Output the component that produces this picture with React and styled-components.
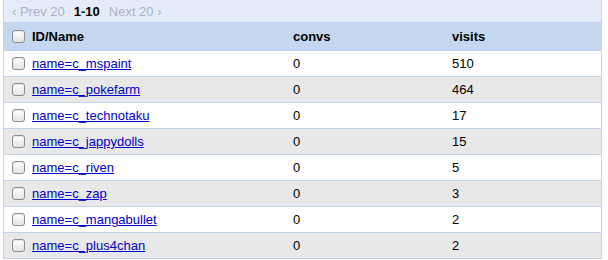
import React from "react";
import styled, { createGlobalStyle } from "styled-components";

const Global = createGlobalStyle`
  html, body { margin: 0; padding: 0; background: #fff; }
  body { font-family: "Liberation Sans", Arial, sans-serif; font-size: 13px; color: #000; }
`;

const Wrap = styled.div`
  margin-left: 3px;
  width: 599px;
  border-left: 1px solid #c3d4ec;
  border-right: 1px solid #c3d4ec;
  border-bottom: 1px solid #c3d4ec;
  box-sizing: border-box;
`;

const Pager = styled.div`
  height: 22px;
  background: #e5ecf9;
  display: flex;
  align-items: center;
  gap: 9px;
  padding-left: 8px;
  font-size: 13px;
  border-bottom: 1px solid #c3d4ec;
`;

const PagerLink = styled.span`
  color: #a9b3c2;
`;

const Current = styled.span`
  font-weight: bold;
  color: #000;
`;

const Row = styled.div`
  display: grid;
  grid-template-columns: 281px 159px 1fr;
  height: ${(p) => (p.$head ? 27 : 25)}px;
  align-items: center;
  background: ${(p) => (p.$head ? "#c5d7ee" : p.$alt ? "#e8e8e8" : "#ffffff")};
  border-top: ${(p) => (p.$head ? "none" : "1px solid #c3d4ec")};
  font-weight: ${(p) => (p.$head ? "bold" : "normal")};
`;

const Cell = styled.div`
  display: flex;
  align-items: center;
  gap: 7px;
  padding-left: 8px;
  white-space: nowrap;
`;

const Check = styled.span`
  display: inline-block;
  width: 11px;
  height: 11px;
  border: 1px solid #8c8c8c;
  border-radius: 3px;
  background: linear-gradient(#ffffff, #e4e4e4);
  box-shadow: inset 0 1px 1px rgba(0,0,0,0.08);
`;

const Link = styled.a`
  color: #0000cc;
  text-decoration: underline;
`;

const data = [
  ["c_mspaint", 0, 510],
  ["c_pokefarm", 0, 464],
  ["c_technotaku", 0, 17],
  ["c_jappydolls", 0, 15],
  ["c_riven", 0, 5],
  ["c_zap", 0, 3],
  ["c_mangabullet", 0, 2],
  ["c_plus4chan", 0, 2],
];

export default function App() {
  return (
    <>
      <Global />
      <Wrap>
        <Pager>
          <PagerLink>‹ Prev 20</PagerLink>
          <Current>1-10</Current>
          <PagerLink>Next 20 ›</PagerLink>
        </Pager>
        <Row $head>
          <Cell>
            <Check />
            ID/Name
          </Cell>
          <Cell>convs</Cell>
          <Cell>visits</Cell>
        </Row>
        {data.map(([n, c, v], i) => (
          <Row key={n} $alt={i % 2 === 1}>
            <Cell>
              <Check />
              <Link href="#">name={n}</Link>
            </Cell>
            <Cell>{c}</Cell>
            <Cell>{v}</Cell>
          </Row>
        ))}
      </Wrap>
    </>
  );
}
